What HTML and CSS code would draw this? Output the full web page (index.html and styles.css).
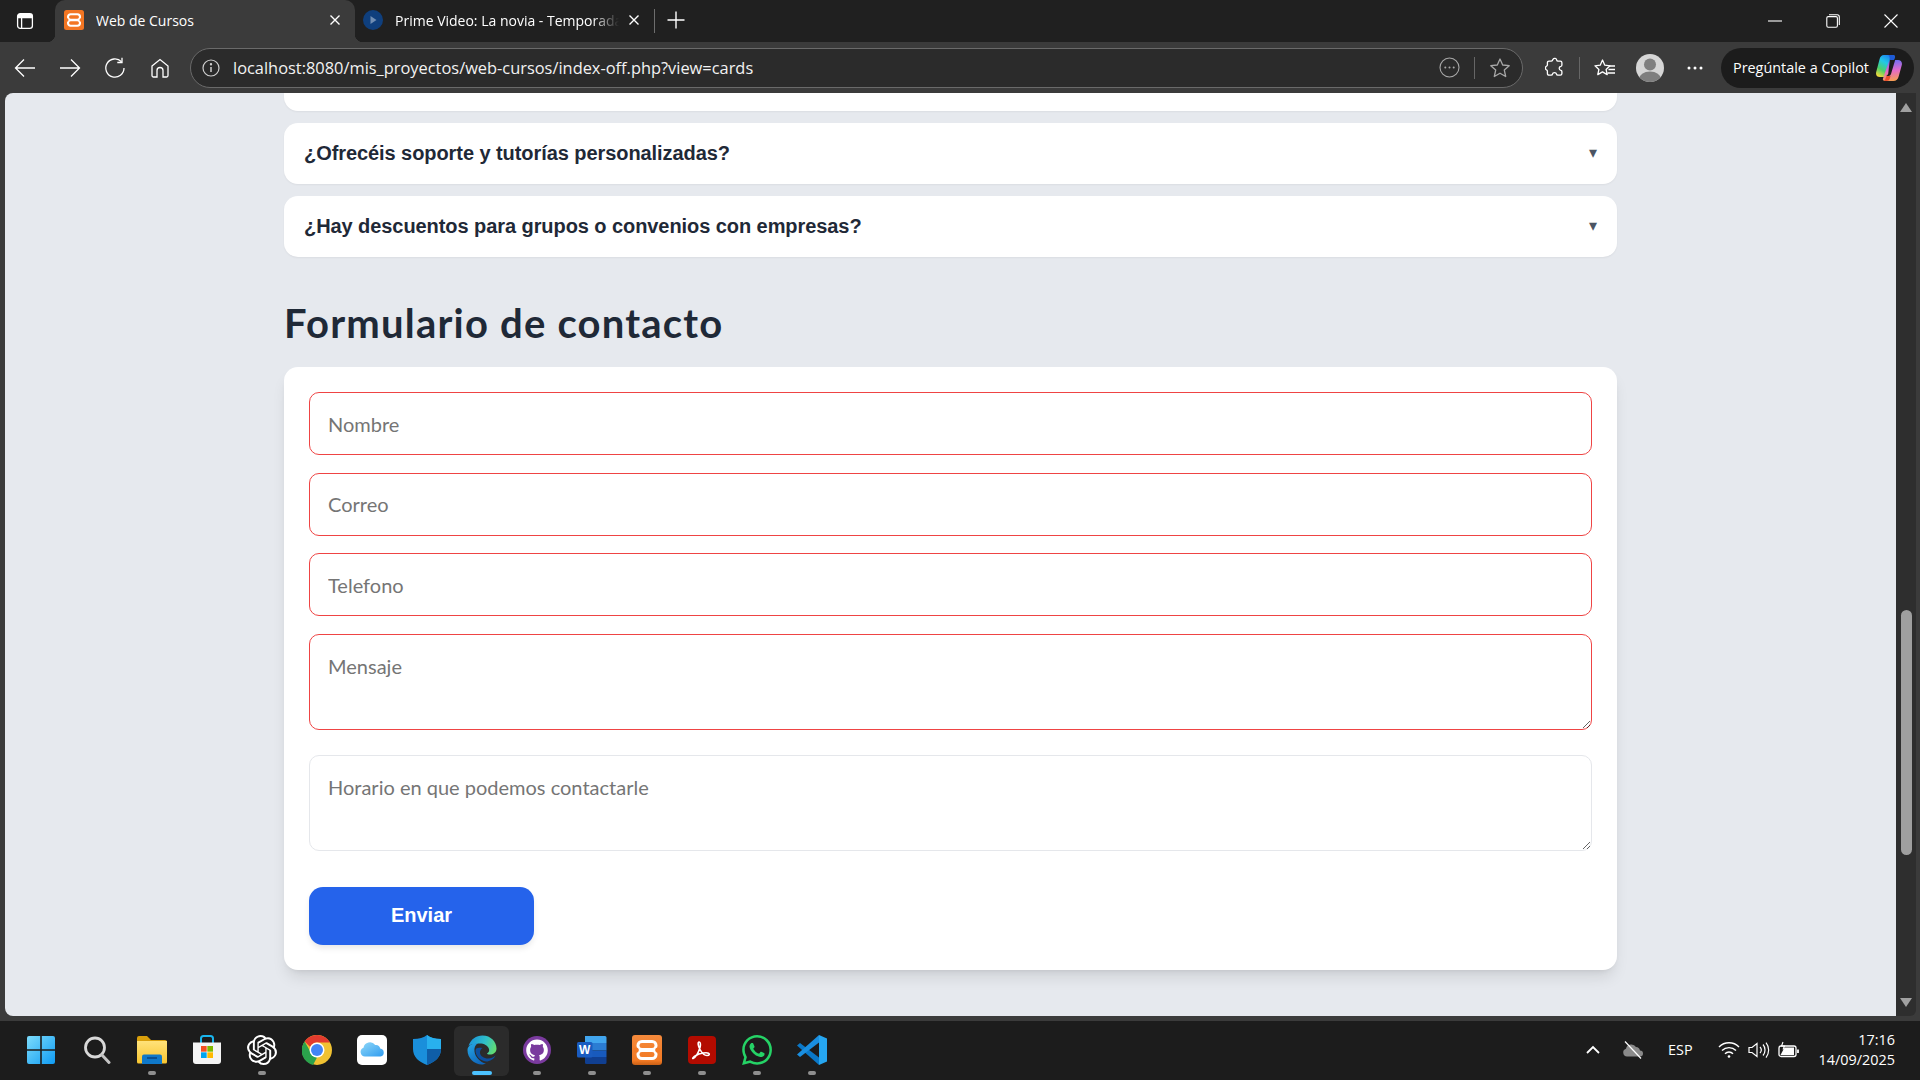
FILE: index.html
```html
<!DOCTYPE html>
<html lang="es">
<head>
<meta charset="utf-8">
<title>Web de Cursos</title>
<link rel="stylesheet" href="styles.css">
</head>
<body>
<div class="desktop">
  <header class="tabstrip">
    <div class="sidebar-btn">
      <svg width="18" height="18" viewBox="0 0 18 18" fill="none" stroke="#fff" stroke-width="1.3"><rect x="1.6" y="1.6" width="14.8" height="14.8" rx="2.6"/><path d="M5.6 5.5v10.9M1.6 5.5h14.8"/><path d="M2 2h14v3.5H2z" fill="#fff" stroke="none"/></svg>
    </div>
    <div class="tab tab-active">
      <svg class="favicon" width="20" height="20" viewBox="0 0 20 20"><rect width="20" height="20" rx="2.5" fill="#f37623"/><g fill="none" stroke="#fff" stroke-width="2.1"><rect x="4" y="4.300" width="12" height="5.400" rx="2.600"/><rect x="4" y="10.300" width="12" height="5.400" rx="2.600"/></g><circle cx="2.800" cy="10" r="1.700" fill="#f37623"/><circle cx="17.200" cy="10" r="1.700" fill="#f37623"/></svg>
      <span class="tab-title">Web de Cursos</span>
      <svg class="tab-close" width="16" height="16" viewBox="0 0 16 16" stroke="#fff" stroke-width="1.4"><path d="M3.5 3.5l9 9M12.5 3.5l-9 9"/></svg>
    </div>
    <div class="tab tab-idle">
      <svg class="favicon" width="20" height="20" viewBox="0 0 20 20"><circle cx="10" cy="10" r="10" fill="#0f3f7d"/><path d="M7.5 6l6 4-6 4z" fill="#6f8db3"/></svg>
      <span class="tab-title tab-fade">Prime Video: La novia - Temporada 1</span>
      <svg class="tab-close" width="16" height="16" viewBox="0 0 16 16" stroke="#fff" stroke-width="1.4"><path d="M3.5 3.5l9 9M12.5 3.5l-9 9"/></svg>
    </div>
    <div class="tab-divider"></div>
    <svg class="new-tab" width="20" height="20" viewBox="0 0 20 20" stroke="#fff" stroke-width="1.4"><path d="M10 1.5v17M1.5 10h17"/></svg>
    <div class="window-controls">
      <div class="win-btn"><svg width="14" height="14" viewBox="0 0 14 14" stroke="#fff" stroke-width="1.1"><path d="M0 7h14"/></svg></div>
      <div class="win-btn"><svg width="14" height="14" viewBox="0 0 14 14" fill="none" stroke="#fff" stroke-width="1.1"><rect x=".8" y="2.6" width="10.6" height="10.6" rx="1.4"/><path d="M3 .7h8.2c1.2 0 2.1.9 2.1 2.1V11"/></svg></div>
      <div class="win-btn"><svg width="14" height="14" viewBox="0 0 14 14" stroke="#fff" stroke-width="1.1"><path d="M.5.5l13 13M13.5.5l-13 13"/></svg></div>
    </div>
  </header>

  <nav class="toolbar">
    <div class="nav-btn"><svg width="22" height="22" viewBox="0 0 22 22" fill="none" stroke="#fff" stroke-width="1.3"><path d="M21 11H1.5M10 2.5L1.5 11l8.5 8.5"/></svg></div>
    <div class="nav-btn"><svg width="22" height="22" viewBox="0 0 22 22" fill="none" stroke="#fff" stroke-width="1.3"><path d="M1 11h19.5M12 2.500l8.500 8.500-8.500 8.500"/></svg></div>
    <div class="nav-btn"><svg width="22" height="22" viewBox="0 0 22 22" fill="none" stroke="#fff" stroke-width="1.3"><path d="M17.500 4.800A9.100 9.100 0 1 0 20 11"/><path d="M18 .8v4.700h-4.700"/></svg></div>
    <div class="nav-btn"><svg width="20" height="22" viewBox="0 0 20 22" fill="none" stroke="#fff" stroke-width="1.300"><path d="M2 9l8-6.500L18 9v9.500a1.500 1.500 0 0 1-1.500 1.500H13v-6.500a3 3 0 0 0-6 0V20H3.500A1.500 1.500 0 0 1 2 18.500z"/></svg></div>
    <div class="address">
      <svg class="info-icon" width="18" height="18" viewBox="0 0 18 18" fill="none" stroke="#cfcfcf" stroke-width="1.200"><circle cx="9" cy="9" r="8"/><path d="M9 8v5" stroke-width="1.500"/><circle cx="9" cy="5.300" r=".6" fill="#cfcfcf"/></svg>
      <span class="url">localhost:8080/mis_proyectos/web-cursos/index-off.php?view=cards</span>
      <svg class="addr-more" width="21" height="21" viewBox="0 0 21 21" fill="none" stroke="#a8a8a8" stroke-width="1.100"><circle cx="10.500" cy="10.500" r="9.500"/><circle cx="6.300" cy="10.500" r="1" fill="#a8a8a8" stroke="none"/><circle cx="10.500" cy="10.500" r="1" fill="#a8a8a8" stroke="none"/><circle cx="14.700" cy="10.500" r="1" fill="#a8a8a8" stroke="none"/></svg>
      <div class="addr-divider"></div>
      <svg class="addr-star" width="22" height="22" viewBox="0 0 22 22" fill="none" stroke="#a8a8a8" stroke-width="1.300"><path d="M11 2l2.700 6 6.500.7-4.900 4.400 1.400 6.400L11 16.200l-5.700 3.300 1.400-6.400L1.800 8.700 8.300 8z" stroke-linejoin="round"/></svg>
    </div>
    <div class="tool-btn tool-ext"><svg width="20" height="21" viewBox="0 0 20 21" fill="none" stroke="#fff" stroke-width="1.300"><path d="M8 2.300c1-1.500 3.500-1 3.700.8.100.7.700 1 1.300 1h2.300c1 0 1.600.6 1.600 1.600v2.400c0 .8-.3 1.200-1 1.300-2.300.2-2.300 3.700 0 4 .7.100 1 .5 1 1.300v1.900c0 1-.6 1.600-1.600 1.600h-2.400c-.8 0-1.300-.3-1.400-1-.3-2-3.700-2-4 0-.100.7-.6 1-1.400 1H4c-1 0-1.600-.6-1.600-1.600v-2.500c0-.6-.4-1-1-1.300-1.300-.7-1.300-2.900 0-3.600.6-.3 1-.7 1-1.300V5.700c0-1 .6-1.600 1.600-1.600h2.300c.7 0 1.300-.4 1.700-1.800z" stroke-linejoin="round"/></svg></div>
    <div class="tool-divider"></div>
    <div class="tool-btn tool-fav"><svg width="22" height="21" viewBox="0 0 22 21" fill="none" stroke="#fff" stroke-width="1.300"><path d="M9.500 2l2.300 5.200 5.200.6-3.900 3.600 1.100 5.200-4.700-2.700-4.700 2.700 1.100-5.200L2 7.800l5.200-.6z" stroke-linejoin="round" transform="translate(-1 1)"/><path d="M15 9h6M14.500 12.500h6.500M13.500 16h7.500"/></svg></div>
    <div class="tool-btn tool-avatar"><svg width="28" height="28" viewBox="0 0 28 28"><defs><clipPath id="avatarClip"><circle cx="14" cy="14" r="14"/></clipPath></defs><circle cx="14" cy="14" r="14" fill="#d6d6d6"/><g clip-path="url(#avatarClip)" fill="#7f7f7f"><circle cx="14" cy="10.500" r="6"/><ellipse cx="14" cy="25" rx="11" ry="7.500"/></g></svg></div>
    <div class="tool-btn tool-dots"><svg width="16" height="4" viewBox="0 0 16 4" fill="#fff"><circle cx="2" cy="2" r="1.500"/><circle cx="8" cy="2" r="1.500"/><circle cx="14" cy="2" r="1.500"/></svg></div>
    <div class="copilot">
      <span class="copilot-text">Pregúntale a Copilot</span>
      <svg width="26" height="28" viewBox="0 0 26 28"><defs><linearGradient id="cpA" x1=".7" y1="0" x2=".2" y2="1"><stop offset="0" stop-color="#1c7cf0"/><stop offset=".35" stop-color="#22c8e8"/><stop offset=".7" stop-color="#4cd06a"/><stop offset="1" stop-color="#f4d93a"/></linearGradient><linearGradient id="cpB" x1=".5" y1="0" x2=".6" y2="1"><stop offset="0" stop-color="#6e6ef5"/><stop offset=".5" stop-color="#e56ac9"/><stop offset="1" stop-color="#f7a04e"/></linearGradient></defs><path d="M8 1h8.500c1.800 0 2.800 1 2.300 2.500L13.500 20c-.6 1.800-2 3-3.800 3H4c-3 0-4.500-2-3.800-5L3.500 5.500C4.200 2.500 5.500 1 8 1z" fill="url(#cpA)"/><path d="M16 6h6c2.800 0 4.500 2 3.800 5l-3 11c-.8 3.500-2.500 5-5.500 5H9c-1.600 0-2.500-1-2-2.500L12.300 9C13 7 14.200 6 16 6z" fill="url(#cpB)"/><path d="M14 4.500h4.500c.6 0 1 .4 .8 1L15 20c-.4 1.200-1.400 2-2.500 2h-2.300c1 -.5 1.700-1.300 2-2.300z" fill="#1c1c1c"/><path d="M12 1h5c1.600 0 2.400 1 2 2.500L18 6h-3c-1 0-1.500-.3-1.300-1.500.1-1.500-.5-3-1.700-3.500z" fill="#1e5bd6"/><path d="M8 27h2.600c1.500 0 2.600-.8 3-2l1-3h-3c-.8 0-1.400.4-1.600 1-.5 2-1 3.300-2 4z" fill="#ea4f2e"/></svg>
    </div>
  </nav>

  <div class="viewport">
    <main class="page">
      <div class="container">
        <div class="faq-item faq-clipped"></div>
        <div class="faq-item"><span>¿Ofrecéis soporte y tutorías personalizadas?</span><span class="caret">▾</span></div>
        <div class="faq-item"><span>¿Hay descuentos para grupos o convenios con empresas?</span><span class="caret">▾</span></div>
        <h2 class="section-title">Formulario de contacto</h2>
        <form class="contact-card">
          <input class="field field-error" type="text" placeholder="Nombre">
          <input class="field field-error" type="text" placeholder="Correo">
          <input class="field field-error" type="text" placeholder="Telefono">
          <textarea class="field area field-error" placeholder="Mensaje"></textarea>
          <textarea class="field area area-plain" placeholder="Horario en que podemos contactarle"></textarea>
          <button class="submit" type="button">Enviar</button>
        </form>
      </div>
    </main>
    <div class="scrollbar">
      <div class="arrow arrow-up"></div>
      <div class="thumb"></div>
      <div class="arrow arrow-down"></div>
    </div>
  </div>

  <footer class="taskbar">
    <div class="task"><svg class="win-logo" width="30" height="30" viewBox="0 0 30 30"><defs><linearGradient id="winG" x1="0" y1="0" x2="1" y2="1"><stop offset="0" stop-color="#7ddcfb"/><stop offset="1" stop-color="#0f9bf3"/></linearGradient></defs><path d="M1 3a2 2 0 0 1 2-2h11.200v13.200H1zM15.800 1H27a2 2 0 0 1 2 2v11.200H15.800zM1 15.800h13.200V29H3a2 2 0 0 1-2-2zM15.800 15.800H29V27a2 2 0 0 1-2 2H15.800z" fill="url(#winG)"/></svg></div>
    <div class="task"><svg width="28" height="30" viewBox="0 0 28 30" fill="none"><circle cx="12" cy="12.500" r="9.500" stroke="#d8d8d8" stroke-width="2.800"/><path d="M19 20l7 7.500" stroke="#c4c4c4" stroke-width="3" stroke-linecap="round"/></svg></div>
    <div class="task task-pip"><svg width="30" height="30" viewBox="0 0 30 30"><defs><linearGradient id="foldG" x1="0" y1="0" x2="0" y2="1"><stop offset="0" stop-color="#ffe27a"/><stop offset="1" stop-color="#f8c52f"/></linearGradient></defs><path d="M0 3a2 2 0 0 1 2-2h8l4 4h14a2 2 0 0 1 2 2v3H0z" fill="#d99f0b"/><path d="M0 6h30v21a1.500 1.500 0 0 1-1.500 1.500h-27A1.500 1.500 0 0 1 0 27z" fill="url(#foldG)"/><path d="M5 21.500a2 2 0 0 1 2-2h16a2 2 0 0 1 2 2V29H5z" fill="#0f78c9"/><path d="M10 23h10" stroke="#083f7c" stroke-width="1.400"/></svg></div>
    <div class="task"><svg width="30" height="30" viewBox="0 0 30 30"><path d="M9 9V3.500C9 2 10 1 11.500 1h7C20 1 21 2 21 3.500V9" fill="none" stroke="#19b5ee" stroke-width="2"/><path d="M1 7.500h28V26a3 3 0 0 1-3 3H4a3 3 0 0 1-3-3z" fill="#f4f4f4"/><rect x="9" y="11" width="12" height="12" rx="1" fill="#fff"/><rect x="9" y="11" width="5.700" height="5.700" fill="#f25022"/><rect x="15.300" y="11" width="5.700" height="5.700" fill="#7fba00"/><rect x="9" y="17.300" width="5.700" height="5.700" fill="#00a4ef"/><rect x="15.300" y="17.300" width="5.700" height="5.700" fill="#ffb900"/></svg></div>
    <div class="task task-pip"><svg width="30" height="30" viewBox="0 0 24 24" fill="#fff"><path d="M22.2819 9.8211a5.9847 5.9847 0 0 0-.5157-4.9108 6.0462 6.0462 0 0 0-6.5098-2.9A6.0651 6.0651 0 0 0 4.9807 4.1818a5.9847 5.9847 0 0 0-3.9977 2.9 6.0462 6.0462 0 0 0 .7427 7.0966 5.98 5.98 0 0 0 .511 4.9107 6.051 6.051 0 0 0 6.5146 2.9001A5.9847 5.9847 0 0 0 13.2599 24a6.0557 6.0557 0 0 0 5.7718-4.2058 5.9894 5.9894 0 0 0 3.9977-2.9001 6.0557 6.0557 0 0 0-.7475-7.0729zm-9.022 12.6081a4.4755 4.4755 0 0 1-2.8764-1.0408l.1419-.0804 4.7783-2.7582a.7948.7948 0 0 0 .3927-.6813v-6.7369l2.02 1.1686a.071.071 0 0 1 .038.052v5.5826a4.504 4.504 0 0 1-4.4945 4.4944zm-9.6607-4.1254a4.4708 4.4708 0 0 1-.5346-3.0137l.142.0852 4.783 2.7582a.7712.7712 0 0 0 .7806 0l5.8428-3.3685v2.3324a.0804.0804 0 0 1-.0332.0615L9.74 19.9502a4.4992 4.4992 0 0 1-6.1408-1.6464zM2.3408 7.8956a4.485 4.485 0 0 1 2.3655-1.9728V11.6a.7664.7664 0 0 0 .3879.6765l5.8144 3.3543-2.0201 1.1685a.0757.0757 0 0 1-.071 0l-4.8303-2.7865A4.504 4.504 0 0 1 2.3408 7.872zm16.5963 3.8558L13.1038 8.364 15.1192 7.2a.0757.0757 0 0 1 .071 0l4.8303 2.7913a4.4944 4.4944 0 0 1-.6765 8.1042v-5.6772a.79.79 0 0 0-.407-.667zm2.0107-3.0231l-.142-.0852-4.7735-2.7818a.7759.7759 0 0 0-.7854 0L9.409 9.2297V6.8974a.0662.0662 0 0 1 .0284-.0615l4.8303-2.7866a4.4992 4.4992 0 0 1 6.6802 4.66zM8.3065 12.863l-2.02-1.1638a.0804.0804 0 0 1-.038-.0567V6.0742a4.4992 4.4992 0 0 1 7.3757-3.4537l-.142.0805L8.704 5.459a.7948.7948 0 0 0-.3927.6813zm1.0976-2.3654l2.602-1.4998 2.6069 1.4998v2.9994l-2.5974 1.4997-2.6067-1.4997Z"/></svg></div>
    <div class="task"><svg width="30" height="30" viewBox="0 0 30 30"><circle cx="15" cy="15" r="15" fill="#f1c232"/><path d="M15 0a15 15 0 0 1 13 7.500H15A7.500 7.500 0 0 0 8.200 12L2.600 6.500A15 15 0 0 1 15 0z" fill="#e33b2e"/><path d="M2.600 6.500l6.600 11.500a7.500 7.500 0 0 0 5.800 4.500L11 30A15 15 0 0 1 2.600 6.500z" fill="#2ba24c"/><circle cx="15" cy="15" r="7.500" fill="#fff"/><circle cx="15" cy="15" r="6" fill="#4285f4"/></svg></div>
    <div class="task"><svg width="30" height="30" viewBox="0 0 30 30"><defs><linearGradient id="cloudG" x1="0" y1="0" x2="1" y2="1"><stop offset="0" stop-color="#8fd8f8"/><stop offset="1" stop-color="#2f9cf0"/></linearGradient></defs><rect width="30" height="30" rx="5" fill="#fff"/><path d="M8 21.500a4.500 4.500 0 0 1-1.500-8.700 6.500 6.500 0 0 1 11.700-2.700 4.500 4.500 0 0 1 5 3.500 4 4 0 0 1 .3 7.900z" fill="url(#cloudG)"/></svg></div>
    <div class="task"><svg width="28" height="30" viewBox="0 0 28 30"><path d="M14 0c3 2.500 8 4 14 4v10c0 8-6 13-14 16C6 27 0 22 0 14V4c6 0 11-1.500 14-4z" fill="#1a8fdb"/><path d="M14 0c3 2.500 8 4 14 4v10H14z" fill="#28b0ee"/><path d="M14 14h14c0 8-6 13-14 16z" fill="#0f5ea8"/></svg></div>
    <div class="task task-active"><svg width="30" height="30" viewBox="0 0 30 30"><defs><linearGradient id="edgeTop" x1="0" y1=".3" x2="1" y2=".6"><stop offset="0" stop-color="#1b93dc"/><stop offset=".55" stop-color="#2fc0c8"/><stop offset="1" stop-color="#62dc72"/></linearGradient><linearGradient id="edgeLow" x1="0" y1="0" x2=".6" y2="1"><stop offset="0" stop-color="#27a9e6"/><stop offset="1" stop-color="#0f66bb"/></linearGradient></defs><path d="M1.500 11C4 4 9 .5 15.500 .5 24 .5 29.500 7 29.500 13.500c0 4-3.500 6-6.500 6-2 0-3-.5-3-1 2-1 2.500-3 2-4.500-1-3.500-5-5.500-9-5.500-5 0-10 1-11.500 2.500z" fill="url(#edgeTop)"/><path d="M.5 15C.5 11 5 8 11 8 8 10 7 13 7.500 16.500 8 22 13 27 19 28.800c-2 .5-3 .7-4 .7C7 29.500 .5 23 .5 15z" fill="url(#edgeLow)"/><path d="M8.500 15.500c0 5.500 5 10.500 10.500 11 4 0 8-2.500 9.500-6-2 2-4.500 3-7.500 3-4 0-8-2.500-8-6 0-2 1-3.500 2.500-4.500-3.500-.5-7-.5-7 2.500z" fill="#0c4f9e"/></svg></div>
    <div class="task task-pip"><svg width="30" height="30" viewBox="0 0 30 30"><circle cx="15" cy="15" r="14" fill="#7a3a9e"/><g transform="translate(4.200 4.200) scale(.9)"><path d="M12 .297c-6.630 0-12 5.373-12 12 0 5.303 3.438 9.800 8.205 11.385.6.113.82-.258.82-.577 0-.285-.01-1.040-.015-2.040-3.338.724-4.042-1.610-4.042-1.610C4.422 18.070 3.633 17.700 3.633 17.700c-1.087-.744.084-.729.084-.729 1.205.084 1.838 1.236 1.838 1.236 1.070 1.835 2.809 1.305 3.495.998.108-.776.417-1.305.76-1.605-2.665-.3-5.466-1.332-5.466-5.930 0-1.310.465-2.380 1.235-3.220-.135-.303-.54-1.523.105-3.176 0 0 1.005-.322 3.300 1.230.96-.267 1.980-.399 3-.405 1.020.006 2.040.138 3 .405 2.280-1.552 3.285-1.230 3.285-1.230.645 1.653.24 2.873.12 3.176.765.84 1.230 1.910 1.230 3.220 0 4.610-2.805 5.625-5.475 5.920.42.36.81 1.096.81 2.220 0 1.606-.015 2.896-.015 3.286 0 .315.21.69.825.57C20.565 22.092 24 17.592 24 12.297c0-6.627-5.373-12-12-12" fill="#fff"/></g></svg></div>
    <div class="task task-pip"><svg width="30" height="30" viewBox="0 0 30 30"><path d="M8 1h20a1.500 1.500 0 0 1 1.500 1.500V8H8z" fill="#41a5ee"/><path d="M8 8h21.500v7.500H8z" fill="#2b7cd3"/><path d="M8 15.500h21.500V22H8z" fill="#185abd"/><path d="M8 22h21.500v5.500A1.500 1.500 0 0 1 28 29H9.500A1.500 1.500 0 0 1 8 27.500z" fill="#103f91"/><rect x="0" y="7" width="15.500" height="15.500" rx="1.500" fill="#1a5cc0"/><text class="word-w" x="7.700" y="19">W</text></svg></div>
    <div class="task task-pip"><svg width="30" height="30" viewBox="0 0 20 20"><defs><linearGradient id="xamppG" x1="0" y1="0" x2="0" y2="1"><stop offset="0" stop-color="#f58a3c"/><stop offset=".85" stop-color="#f27a24"/><stop offset="1" stop-color="#c96016"/></linearGradient></defs><rect width="20" height="20" rx="2" fill="url(#xamppG)"/><g fill="none" stroke="#fff" stroke-width="2"><rect x="4" y="4.300" width="12" height="5.400" rx="2.600"/><rect x="4" y="10.300" width="12" height="5.400" rx="2.600"/></g><circle cx="2.800" cy="10" r="1.700" fill="#f37a26"/><circle cx="17.200" cy="10" r="1.700" fill="#f37a26"/></svg></div>
    <div class="task task-pip"><svg width="28" height="28" viewBox="0 0 28 28"><rect width="28" height="28" rx="4" fill="#b30b00"/><path d="M5 22.500c3-1.500 5.500-6 7-11 .7-2.500.6-5.500-.8-5.500-1.700 0-1.200 3.700.8 7.500 2 3.700 4.700 6 7 6 2.500 0 3-1.500 1.500-2.300-2-1-8.500-.2-13 2.500-2.300 1.400-3.300 3-2.500 2.800z" fill="none" stroke="#fff" stroke-width="1.600"/></svg></div>
    <div class="task task-pip"><svg width="30" height="30" viewBox="0 0 24 24" fill="#25d366"><path d="M17.472 14.382c-.297-.149-1.758-.867-2.030-.967-.273-.099-.471-.148-.67.15-.197.297-.767.966-.94 1.164-.173.199-.347.223-.644.075-.297-.15-1.255-.463-2.390-1.475-.883-.788-1.480-1.761-1.653-2.059-.173-.297-.018-.458.13-.606.134-.133.298-.347.446-.52.149-.174.198-.298.298-.497.099-.198.05-.371-.025-.52-.075-.149-.669-1.612-.916-2.207-.242-.579-.487-.5-.669-.51-.173-.008-.371-.01-.57-.01-.198 0-.52.074-.792.372-.272.297-1.040 1.016-1.040 2.479 0 1.462 1.065 2.875 1.213 3.074.149.198 2.096 3.200 5.077 4.487.709.306 1.262.489 1.694.625.712.227 1.360.195 1.871.118.571-.085 1.758-.719 2.006-1.413.248-.694.248-1.289.173-1.413-.074-.124-.272-.198-.57-.347m-5.421 7.403h-.004a9.870 9.870 0 01-5.031-1.378l-.361-.214-3.741.982.998-3.648-.235-.374a9.860 9.860 0 01-1.510-5.260c.001-5.450 4.436-9.884 9.888-9.884 2.640 0 5.122 1.030 6.988 2.898a9.825 9.825 0 012.893 6.994c-.003 5.450-4.437 9.884-9.885 9.884m8.413-18.297A11.815 11.815 0 0012.050 0C5.495 0 .16 5.335.157 11.892c0 2.096.547 4.142 1.588 5.945L.057 24l6.305-1.654a11.882 11.882 0 005.683 1.448h.005c6.554 0 11.890-5.335 11.893-11.893a11.821 11.821 0 00-3.480-8.413Z"/></svg></div>
    <div class="task task-pip"><svg width="30" height="30" viewBox="0 0 30 30"><path d="M0 10.500L3 8l19 14.500V30z" fill="#0a78c8"/><path d="M22 0L0 19.500 3 22 22 7.500z" fill="#1a8fe0"/><path d="M22 0l8 3.500v23L22 30z" fill="#26a6f0"/></svg></div>

    <div class="tray">
      <svg class="tray-chevron" width="14" height="9" viewBox="0 0 14 9" fill="none" stroke="#fff" stroke-width="1.800"><path d="M1 8l6-6 6 6"/></svg>
      <svg class="tray-cloud" width="22" height="18" viewBox="0 0 22 18"><path d="M5 15.500a4 4 0 0 1-1-7.800 5.500 5.500 0 0 1 10-1.700 4.500 4.500 0 0 1 4 3.500 3 3 0 0 1 0 6z" fill="#8a8a8a"/><path d="M3 .5l16 17" stroke="#fff" stroke-width="1.200"/></svg>
      <span class="tray-lang">ESP</span>
      <svg class="tray-icon" width="22" height="18" viewBox="0 0 22 18" fill="none" stroke="#fff" stroke-width="1.400"><path d="M1 6a14 14 0 0 1 20 0M4 9.500a10 10 0 0 1 14 0M7 12.800a5.500 5.500 0 0 1 8 0"/><circle cx="11" cy="15.500" r="1.300" fill="#fff" stroke="none"/></svg>
      <svg class="tray-icon" width="22" height="18" viewBox="0 0 22 18" fill="none" stroke="#fff" stroke-width="1.200"><path d="M1 6.500h3L9 2.500v13l-5-4H1z"/><path d="M12 6a4.500 4.500 0 0 1 0 6M15 3.500a8.500 8.500 0 0 1 0 11M18 1.500a12 12 0 0 1 0 15"/></svg>
      <svg class="tray-icon" width="22" height="18" viewBox="0 0 22 18" fill="none" stroke="#fff" stroke-width="1.300"><rect x="1" y="5" width="17" height="10.500" rx="2"/><path d="M20 8.500v3.500" stroke-width="1.800"/><path d="M2.500 14l4-7.500h9.500v7.500z" fill="#fff" stroke="none"/><path d="M5 1L3.500 5h3L5 8.500" stroke-width="1.100"/></svg>
      <div class="clock"><span>17:16</span><span>14/09/2025</span></div>
    </div>
  </footer>
</div>
</body>
</html>
```
FILE: styles.css
```css
* { box-sizing: border-box; }
html, body { margin: 0; height: 100%; overflow: hidden; }
body { font-family: "Open Sans", "Noto Sans", sans-serif; color: #fff; background: #1c1c1c; }
.desktop { display: flex; flex-direction: column; width: 1920px; height: 1080px; }

/* Tab strip */
.tabstrip { display: flex; align-items: center; height: 42px; background: #202020; flex: none; }
.sidebar-btn { width: 55px; padding-left: 16px; display: flex; align-items: center; }
.tab { display: flex; align-items: center; height: 42px; padding-bottom: 2px; font-size: 14px; }
.tab-active { position: relative; width: 300px; padding-left: 9px; padding-right: 12px; background: #3b3b3b; border-radius: 10px 10px 0 0; }
.tab-active::before, .tab-active::after { content: ""; position: absolute; bottom: 0; width: 8px; height: 8px; }
.tab-active::before { left: -8px; background: radial-gradient(circle at 0 0, transparent 8px, #3b3b3b 8.5px); }
.tab-active::after { right: -8px; background: radial-gradient(circle at 100% 0, transparent 8px, #3b3b3b 8.5px); }
.tab-idle { width: 293px; padding-left: 8px; padding-right: 6px; }
.favicon { flex: none; margin-right: 12px; }
.tab-title { flex: 1; white-space: nowrap; overflow: hidden; }
.tab-fade { -webkit-mask-image: linear-gradient(90deg, #000 88%, transparent 100%); mask-image: linear-gradient(90deg, #000 88%, transparent 100%); }
.tab-close { flex: none; margin-left: 7px; }
.tab-divider { width: 1px; height: 24px; background: #6d6d6d; margin-left: 6px; }
.new-tab { margin-left: 11px; margin-bottom: 2px; }
.window-controls { display: flex; margin-left: auto; }
.win-btn { width: 58px; height: 42px; display: flex; align-items: center; justify-content: center; }

/* Toolbar */
.toolbar { display: flex; align-items: center; height: 51px; background: #3b3b3b; padding-left: 2px; flex: none; }
.nav-btn { width: 45px; height: 36px; display: flex; align-items: center; justify-content: center; }
.address { display: flex; align-items: center; width: 1333px; height: 40px; margin-left: 8px; padding: 0 11px 0 11px; border: 1px solid #6a6a6a; border-radius: 20px; background: #2b2b2b; }
.info-icon { flex: none; }
.url { flex: 1; margin-left: 13px; font-size: 16.400px; white-space: nowrap; color: #f2f2f2; }
.addr-divider { width: 1px; height: 22px; background: #666; margin: 0 14px; }
.tool-btn { width: 36px; height: 36px; display: flex; align-items: center; justify-content: center; }
.tool-ext { margin-left: 14px; }
.tool-divider { width: 1px; height: 22px; background: #666; margin-left: 6px; }
.tool-fav { margin-left: 7px; }
.tool-avatar { margin-left: 9px; }
.tool-dots { margin-left: 9px; }
.copilot { display: flex; align-items: center; width: 193px; height: 40px; margin-left: 8px; padding-left: 12px; border-radius: 20px; background: #1c1c1c; }
.copilot-text { font-size: 14.400px; margin-right: 7px; white-space: nowrap; }

/* Viewport */
.viewport { display: flex; flex: 1; min-height: 0; background: #3b3b3b; padding: 0 4px 5px 5px; }
.page { flex: 1; min-width: 0; overflow: hidden; background: #e6e9ee; border-radius: 8px 0 0 8px; }
.container { width: 1333px; margin: 0 auto; font-family: "Liberation Sans", Arial, sans-serif; color: #1f2937; }
.faq-item { display: flex; align-items: center; justify-content: space-between; height: 61px; margin-bottom: 12px; padding: 0 20px; background: #fff; border-radius: 14px; font-size: 20px; font-weight: 700; letter-spacing: -.07px; box-shadow: 0 1px 2px rgba(0, 0, 0, .05); }
.faq-clipped { height: 18px; border-radius: 0 0 14px 14px; }
.caret { font-size: 16px; font-weight: 400; color: #4b5563; font-family: "DejaVu Sans", sans-serif; margin-top: -2px; }
.section-title { margin: 42px 0 20px; font-family: Lato, "Noto Sans", sans-serif; font-size: 40px; line-height: 48px; font-weight: 700; letter-spacing: 1.200px; color: #1f2937; }
.contact-card { display: flex; flex-direction: column; align-items: flex-start; padding: 25px; background: #fff; border-radius: 14px; box-shadow: 0 10px 15px -3px rgba(0, 0, 0, .1), 0 4px 6px -4px rgba(0, 0, 0, .1); }
.field { display: block; width: 100%; height: 63px; margin: 0 0 17.670px; padding: 0 18px; border: 1px solid #e5e7eb; border-radius: 10px; background: #fff; font-family: Lato, "Noto Sans", sans-serif; font-size: 20px; color: #1f2937; outline: none; }
.field::placeholder { color: #757575; opacity: 1; }
.area { height: 96px; padding-top: 17px; padding-bottom: 18px; margin-bottom: 25px; line-height: 28px; resize: vertical; }
.area-plain { margin-bottom: 36px; }
.field-error { border-color: #ef4444; }
.submit { width: 225px; height: 58px; border: 0; border-radius: 14px; background: #2563eb; color: #fff; font-family: "Liberation Sans", Arial, sans-serif; font-size: 20px; font-weight: 700; box-shadow: 0 4px 6px -1px rgba(0, 0, 0, .1); }

/* Scrollbar */
.scrollbar { display: flex; flex-direction: column; align-items: center; width: 20px; background: #2e2e2e; padding: 10px 0 9px; border-radius: 0 0 6px 0; }
.thumb { width: 11px; height: 245px; margin-top: auto; margin-bottom: 143px; background: #9f9f9f; border-radius: 6px; }
.arrow { width: 0; height: 0; border-left: 6px solid transparent; border-right: 6px solid transparent; }
.arrow-up { border-bottom: 9px solid #a0a0a0; }
.arrow-down { border-top: 9px solid #a0a0a0; }

/* Taskbar */
.taskbar { display: flex; align-items: center; height: 59px; flex: none; background: #1c1c1c; padding: 0 25px 0 14px; }
.task { position: relative; width: 55px; height: 50px; padding-bottom: 2px; display: flex; align-items: center; justify-content: center; }
.win-logo { margin-left: -2px; }
.task-pip::after, .task-active::after { content: ""; position: absolute; bottom: 1px; left: 50%; width: 8px; height: 4px; margin-left: -4px; border-radius: 2px; background: #8f8f8f; }
.task-active { background: #2b2b2b; background-clip: padding-box; border-radius: 6px; }
.task-active::after { width: 20px; margin-left: -10px; background: #4cc2ff; }
.word-w { font-family: "Liberation Sans", Arial, sans-serif; font-size: 12px; font-weight: 700; fill: #fff; text-anchor: middle; }
.tray { display: flex; align-items: center; margin-left: auto; padding-bottom: 2px; }
.tray-chevron { margin-right: 22px; }
.tray-cloud { margin-right: 24px; }
.tray-lang { width: 26px; font-size: 14.400px; margin-right: 24px; white-space: nowrap; }
.tray-icon { margin-right: 8px; }
.clock { display: flex; flex-direction: column; align-items: flex-end; width: 87px; font-size: 14.400px; line-height: 20px; }
```
